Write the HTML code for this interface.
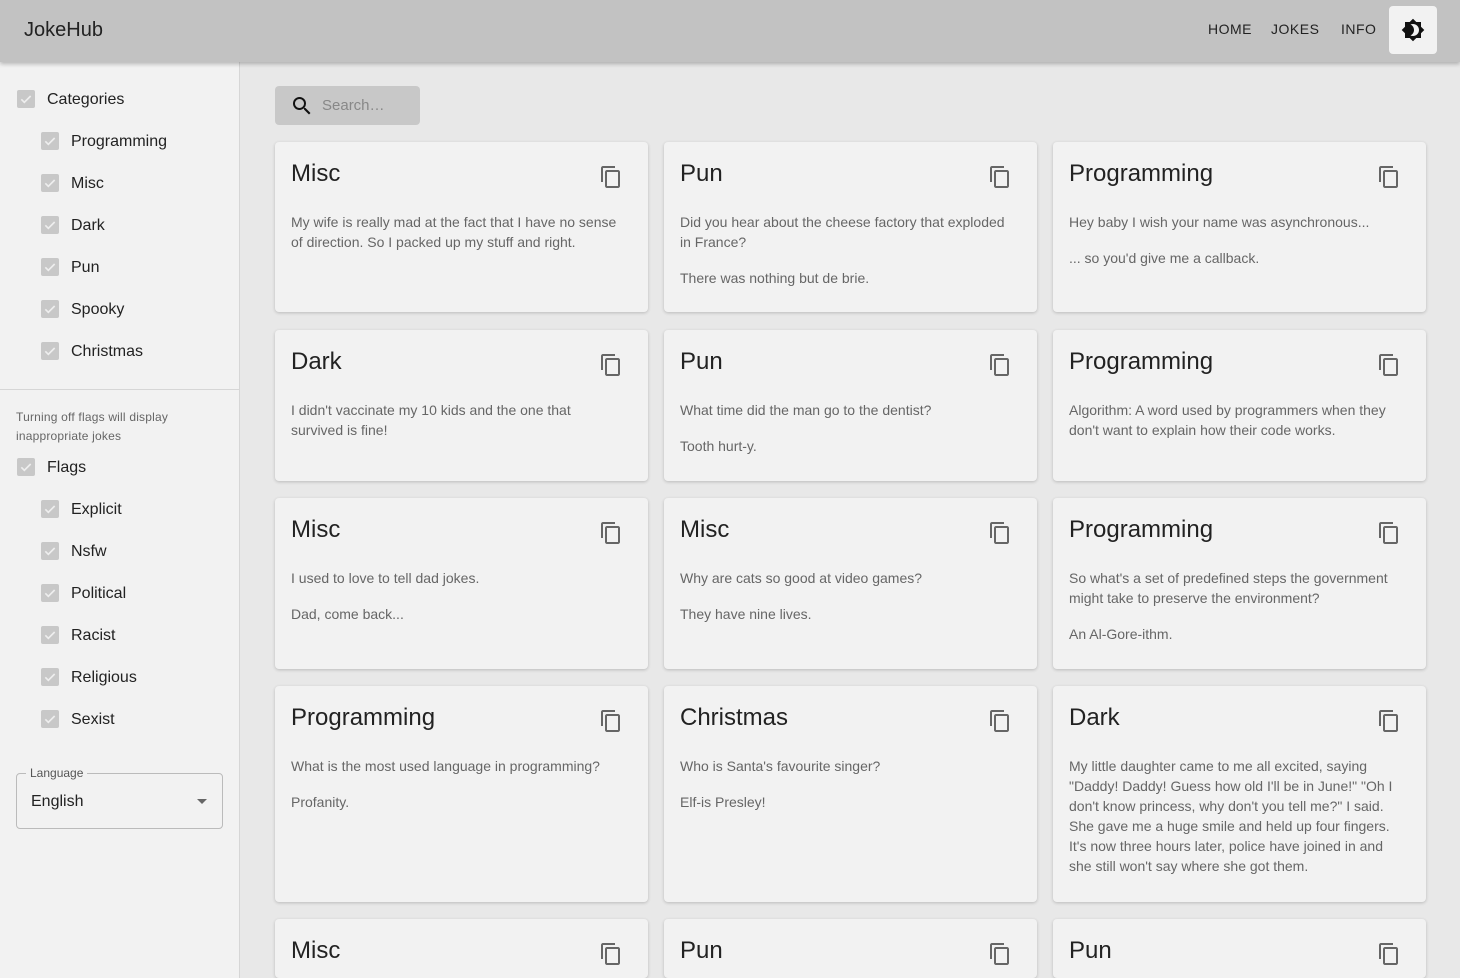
<!DOCTYPE html>
<html style="overflow:hidden;height:978px"><head><meta charset="utf-8"><style>
*{box-sizing:border-box;margin:0;padding:0}
body{width:1460px;height:978px;overflow:hidden;background:#e8e8e8;font-family:"Liberation Sans",sans-serif;color:#222;position:relative}
.hdr{position:absolute;left:0;top:0;width:1460px;height:62px;background:#c2c2c2;box-shadow:0 2px 4px rgba(0,0,0,.25);z-index:5}
.logo{position:absolute;left:24px;top:19px;font-size:20px;color:#222}
.nav{position:absolute;top:21px;font-size:14px;letter-spacing:.5px;color:#222}
.tbtn{position:absolute;left:1389px;top:6px;width:48px;height:48px;background:#f2f2f2;border-radius:4px}
.side{position:absolute;left:0;top:62px;width:240px;height:916px;background:#f2f2f2;border-right:1px solid #d6d6d6}
.cb{position:absolute;width:18px;height:18px;background:#c8c8c8;border-radius:2px}
.cb svg{position:absolute;left:1px;top:1px}
.lbl{position:absolute;font-size:16px;color:#222}
.note{position:absolute;left:16px;top:346px;font-size:12px;line-height:19px;color:#666;letter-spacing:.2px}
.sel{position:absolute;left:16px;top:711px;width:207px;height:56px;border:1px solid #bbb;border-radius:4px}
.search{position:absolute;left:275px;top:86px;width:145px;height:39px;background:#c8c8c8;border-radius:4px}
.card{position:absolute;width:373px;background:#f2f2f2;border-radius:4px;box-shadow:0 1px 3px rgba(0,0,0,.2)}
.card h2{position:absolute;left:16px;top:18px;font-size:24px;font-weight:normal;color:#222}
.card .cp{position:absolute;left:324px;top:23px}
.card .b{position:absolute;left:16px;top:70px;font-size:14px;line-height:20px;color:#666;white-space:nowrap}
.card .b p+p{margin-top:16px}
</style></head><body>
<div class="hdr">
<div class="logo">JokeHub</div>
<div class="nav" style="left:1208px">HOME</div>
<div class="nav" style="left:1271px">JOKES</div>
<div class="nav" style="left:1341px">INFO</div>
<div class="tbtn"><svg width="24" height="24" viewBox="0 0 24 24" style="position:absolute;left:12px;top:12px"><path fill="#111" d="M20 8.69V4h-4.69L12 .69 8.69 4H4v4.69L.69 12 4 15.31V20h4.69L12 23.31 15.31 20H20v-4.69L23.31 12 20 8.69zM12 18c-.89 0-1.740-.2-2.5-.55C11.56 16.5 13 14.42 13 12s-1.44-4.5-3.5-5.45C10.26 6.2 11.11 6 12 6c3.31 0 6 2.69 6 6s-2.69 6-6 6z"/></svg></div>
</div>
<div class="side">
<div style="position:absolute;left:0;top:327px;width:239px;height:1px;background:#d6d6d6"></div>
<div class="note">Turning off flags will display<br>inappropriate jokes</div>
<div class="sel"><div style="position:absolute;left:9px;top:-8px;background:#f2f2f2;padding:0 4px;font-size:12px;color:#555">Language</div><div style="position:absolute;left:14px;top:19px;font-size:16px;color:#222">English</div><svg width="24" height="24" viewBox="0 0 24 24" style="position:absolute;left:173px;top:15px"><path fill="#666" d="M7 10l5 5 5-5z"/></svg></div>
</div>
<div id="cbs"></div>
<div class="search"><svg width="24" height="24" viewBox="0 0 24 24" style="position:absolute;left:15px;top:8px"><path fill="#111" d="M15.5 14h-.79l-.28-.27A6.47 6.47 0 0016 9.5 6.5 6.5 0 109.5 16c1.61 0 3.09-.59 4.23-1.57l.27.28v.79l5 4.99L20.49 19l-4.99-5zm-6 0C7.01 14 5 11.99 5 9.5S7.01 5 9.5 5 14 7.01 14 9.5 11.99 14 9.5 14z"/></svg><div style="position:absolute;left:47px;top:11px;font-size:15px;color:#888">Search…</div></div>
<div id="cards"></div>
<script>
var items=[["Categories",16,99],["Programming",40,141],["Misc",40,183],["Dark",40,225],["Pun",40,267],["Spooky",40,309],["Christmas",40,351],["Flags",16,467],["Explicit",40,509],["Nsfw",40,551],["Political",40,593],["Racist",40,635],["Religious",40,677],["Sexist",40,719]];
var h="";items.forEach(function(i){h+='<div class="cb" style="left:'+(i[1]+1)+'px;top:'+(i[2]-9)+'px"><svg width="16" height="16" viewBox="0 0 24 24"><path fill="none" stroke="#eee" stroke-width="2.5" d="M5 12.5l4.5 4.5L19 7.5"/></svg></div><div class="lbl" style="left:'+(i[1]+31)+'px;top:'+(i[2]-8)+'px">'+i[0]+'</div>';});
document.getElementById("cbs").innerHTML=h;
var cols=[275,664,1053];
var rows=[[142,170],[330,151],[498,171],[686,216],[919,59]];
var cards=[
["Misc",["My wife is really mad at the fact that I have no sense<br>of direction. So I packed up my stuff and right."]],
["Pun",["Did you hear about the cheese factory that exploded<br>in France?","There was nothing but de brie."]],
["Programming",["Hey baby I wish your name was asynchronous...","... so you'd give me a callback."]],
["Dark",["I didn't vaccinate my 10 kids and the one that<br>survived is fine!"]],
["Pun",["What time did the man go to the dentist?","Tooth hurt-y."]],
["Programming",["Algorithm: A word used by programmers when they<br>don't want to explain how their code works."]],
["Misc",["I used to love to tell dad jokes.","Dad, come back..."]],
["Misc",["Why are cats so good at video games?","They have nine lives."]],
["Programming",["So what's a set of predefined steps the government<br>might take to preserve the environment?","An Al-Gore-ithm."]],
["Programming",["What is the most used language in programming?","Profanity."]],
["Christmas",["Who is Santa's favourite singer?","Elf-is Presley!"]],
["Dark",["My little daughter came to me all excited, saying<br>\"Daddy! Daddy! Guess how old I'll be in June!\" \"Oh I<br>don't know princess, why don't you tell me?\" I said.<br>She gave me a huge smile and held up four fingers.<br>It's now three hours later, police have joined in and<br>she still won't say where she got them."]],
["Misc",[]],["Pun",[]],["Pun",[]]];
var ic='<svg class="cp" width="24" height="24" viewBox="0 0 24 24"><path fill="#666" d="M16 1H4c-1.1 0-2 .9-2 2v14h2V3h12V1zm3 4H8c-1.1 0-2 .9-2 2v14c0 1.1.9 2 2 2h11c1.1 0 2-.9 2-2V7c0-1.1-.9-2-2-2zm0 16H8V7h11v14z"/></svg>';
h="";cards.forEach(function(c,i){var r=rows[Math.floor(i/3)];h+='<div class="card" style="left:'+cols[i%3]+'px;top:'+r[0]+'px;height:'+r[1]+'px"><h2>'+c[0]+'</h2>'+ic+'<div class="b">'+c[1].map(function(p){return '<p>'+p+'</p>'}).join('')+'</div></div>';});
document.getElementById("cards").innerHTML=h;
</script>
</body></html>
